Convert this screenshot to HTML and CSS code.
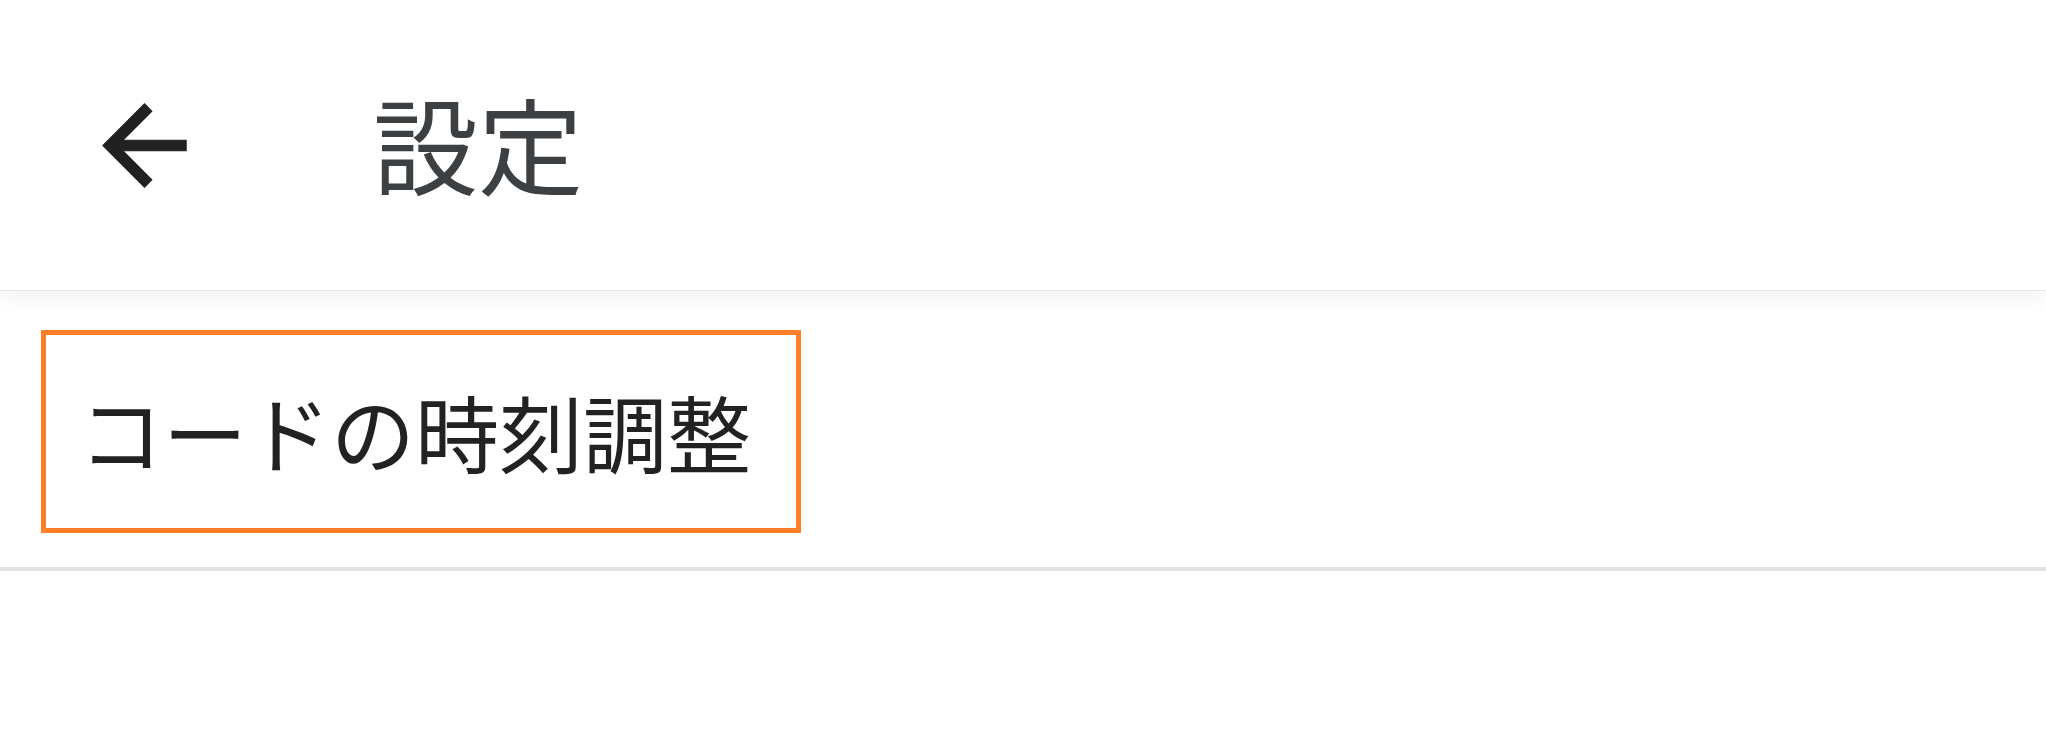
FILE: index.html
```html
<!DOCTYPE html>
<html lang="ja">
<head>
    <meta charset="UTF-8">
    <meta name="viewport" content="width=device-width, initial-scale=1.0">
    <title>設定</title>
    <link rel="stylesheet" href="styles.css">
</head>
<body>

<div class="app-bar">
    <button class="back-btn" aria-label="戻る">
        <svg viewBox="0 0 24 24" class="back-icon">
            <path d="M20 11H7.83l5.59-5.59L12 4l-8 8 8 8 1.41-1.41L7.83 13H20v-2z"/>
        </svg>
    </button>
    <h1 class="title">設定</h1>
</div>

<div class="settings-list">
    <div class="setting-item">
        <div class="highlight">
            <span class="setting-label">コードの時刻調整</span>
        </div>
    </div>
</div>

</body>
</html>
```

FILE: styles.css
```css
body {
    font-family: "Noto Sans CJK JP", "Noto Sans", sans-serif;
    background-color: #fff;
    margin: 0;
}
.app-bar {
    position: relative;
    z-index: 1;
    display: flex;
    align-items: center;
    height: 290px;
    background: #fff;
    box-shadow: 0 1px 0 #e8e8e8, 0 8px 18px rgba(0, 0, 0, 0.05);
}
.back-btn {
    display: flex;
    padding: 0;
    margin-left: 82px;
    background: none;
    border: none;
    cursor: pointer;
}
.back-icon {
    width: 125px;
    height: 125px;
    fill: #212121;
    stroke: #212121;
    stroke-width: 0.2;
}
.title {
    margin: 0 0 7px 166px;
    font-size: 105px;
    font-weight: 400;
    line-height: 1;
    color: #3c4043;
}
.setting-item {
    padding: 40px 0 34px 41px;
    border-bottom: 4px solid #e2e2e2;
    box-shadow: 0 1px 2px rgba(0, 0, 0, 0.06);
}
.highlight {
    box-sizing: border-box;
    width: 760px;
    padding: 54px 0 55px 33px;
    border: 5px solid #fe7f2a;
}
.setting-label {
    display: block;
    font-size: 84px;
    line-height: 84px;
    color: #222;
}
```
